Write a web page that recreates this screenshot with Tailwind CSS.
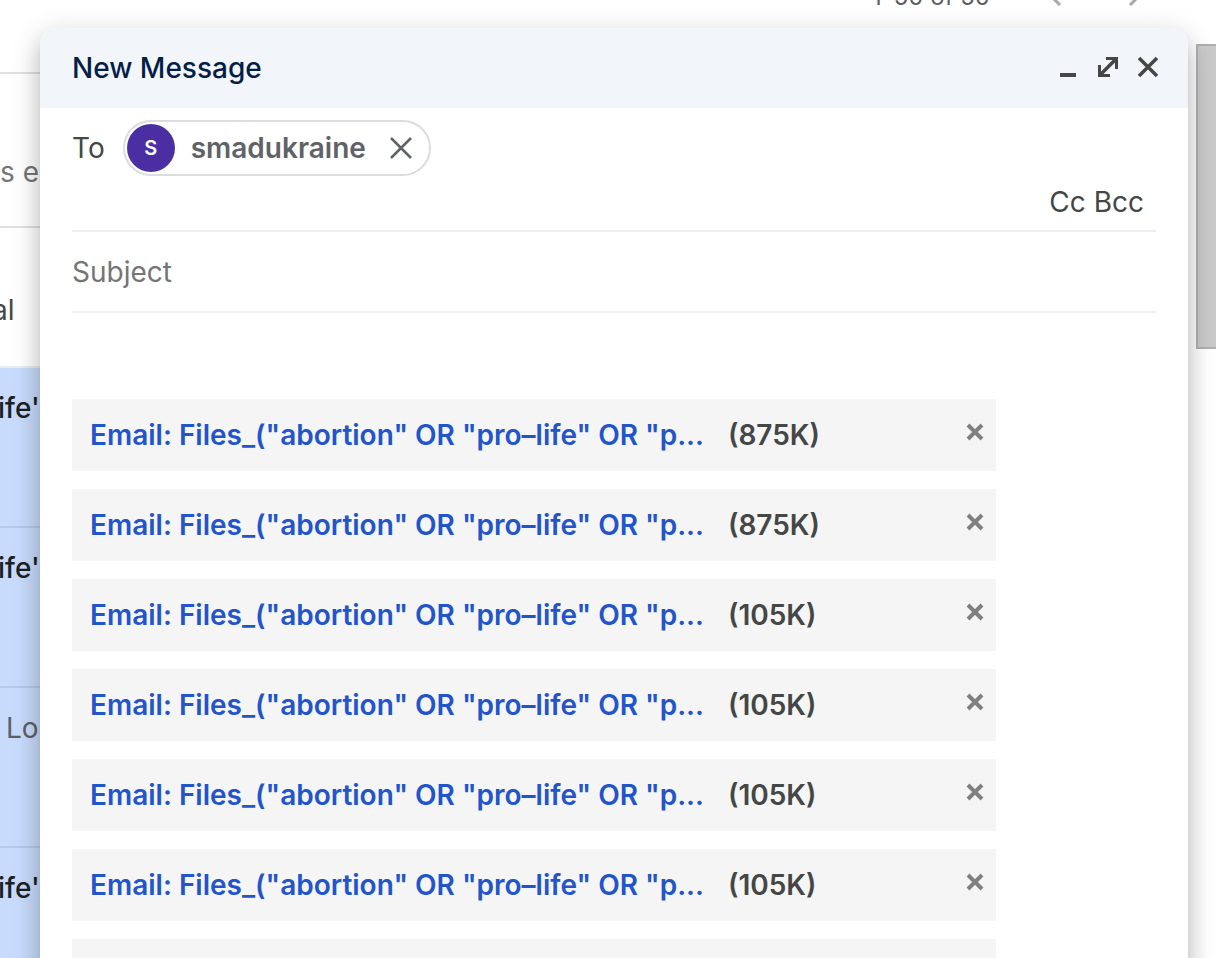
<!DOCTYPE html>
<html lang="en">
<head>
<meta charset="utf-8">
<title>New Message</title>
<script src="https://cdn.jsdelivr.net/npm/@tailwindcss/browser@4"></script>
</head>
<body class="relative h-screen overflow-hidden bg-white font-['Inter','Liberation_Sans',sans-serif] text-[28px] leading-9 text-[#444746]">

<!-- Mailbox behind the compose window -->
<div class="flex h-full overflow-hidden">
  <main class="mr-9 flex min-w-0 flex-1 flex-col">
    <header class="flex h-[74px] shrink-0 items-start justify-end overflow-hidden border-b-2 border-[#e0e0e0]">
      <div class="-mt-[19px] flex items-center gap-[54px] pr-3.5">
        <span class="text-2xl text-[#5e5e5e]">1–50 of 50</span>
        <button type="button" aria-label="Newer"><svg class="size-6" viewBox="0 0 24 24" fill="none" stroke="#a8a8a8" stroke-width="3"><path d="M16 4 8 12l8 8"/></svg></button>
        <button type="button" aria-label="Older"><svg class="size-6" viewBox="0 0 24 24" fill="none" stroke="#a8a8a8" stroke-width="3"><path d="M8 4l8 8-8 8"/></svg></button>
      </div>
    </header>
    <ul class="whitespace-nowrap">
      <li class="h-[154px] border-b-2 border-[#e0e0e0] pt-20 text-[#747775]">s en</li>
      <li class="h-[140px] border-b-2 border-[#ececec] pt-16"><span class="-ml-2">al</span></li>
      <li class="h-40 border-b-2 border-[#b7c9ea] bg-[#c8dbfc] pt-[22px] font-medium text-[#1f1f1f]"><span class="-ml-0.5">ife'</span></li>
      <li class="h-40 border-b-2 border-[#b7c9ea] bg-[#c8dbfc] pt-[22px] font-medium text-[#1f1f1f]"><span class="-ml-0.5">ife'</span></li>
      <li class="h-40 border-b-2 border-[#b7c9ea] bg-[#c8dbfc] pt-[22px] pl-1.5 text-[#5e6063]">Lo</li>
      <li class="h-40 border-b-2 border-[#b7c9ea] bg-[#c8dbfc] pt-[22px] font-medium text-[#1f1f1f]"><span class="-ml-0.5">ife'</span></li>
    </ul>
  </main>
  <div class="w-5 bg-white pt-11">
    <div class="h-[305px] border-2 border-r-0 border-[#b0b0b0] bg-[#cacaca]"></div>
  </div>
</div>

<!-- Compose window -->
<section aria-label="New Message" class="absolute top-7 right-7 -bottom-10 left-10 flex flex-col overflow-hidden rounded-t-2xl bg-white shadow-[0_16px_20px_2px_rgba(0,0,0,0.14),0_6px_28px_4px_rgba(0,0,0,0.12),0_10px_10px_-6px_rgba(0,0,0,0.2)]">
  <header class="flex h-20 shrink-0 items-center justify-between bg-[#f2f6fb] pr-7 pl-8">
    <h1 class="font-medium text-[#041e49]">New Message</h1>
    <div class="flex gap-4 text-[#444746]">
      <button type="button" aria-label="Minimize"><svg class="size-6" viewBox="0 0 24 24" fill="currentColor"><path d="M4 17h16v4H4z"/></svg></button>
      <button type="button" aria-label="Full screen"><svg class="size-6" viewBox="0 0 24 24" fill="currentColor"><path d="M10 1h12v12h-3V6.500L7.500 18H14v3H2V9h3v6.500L16.500 4H10z"/></svg></button>
      <button type="button" aria-label="Close"><svg class="size-6" viewBox="0 0 24 24" fill="none" stroke="currentColor" stroke-width="3.500"><path d="M3 2l18 18M21 2 3 20"/></svg></button>
    </div>
  </header>

  <form class="flex flex-col px-8">
    <div class="border-b-2 border-[#eeeeee] pt-3">
      <div class="flex items-center gap-[18px]">
        <span>To</span>
        <div class="flex h-14 items-center rounded-full border-2 border-[#dadce0] pr-4 pl-0.5">
          <span class="flex size-12 items-center justify-center rounded-full bg-[#4c2ea3] text-xl font-semibold text-white">S</span>
          <span class="pl-4 font-semibold text-[#5f6368]">smadukraine</span>
          <button type="button" aria-label="Remove smadukraine" class="pl-[23px]"><svg class="size-6" viewBox="0 0 24 24" fill="none" stroke="#5f6368" stroke-width="2.500"><path d="M2 2l20 20M22 2 2 22"/></svg></button>
        </div>
      </div>
      <div class="flex justify-end gap-2 pt-2 pr-3 pb-[10px]">
        <button type="button">Cc</button>
        <button type="button">Bcc</button>
      </div>
    </div>
    <input type="text" aria-label="Subject" placeholder="Subject" class="h-[81px] w-full border-b-2 border-[#eeeeee] outline-none placeholder:text-[#757575]">

    <ul id="files" class="flex max-w-[924px] flex-col gap-[18px] pt-[86px]"></ul>
  </form>
</section>

<script>
  const sizes = ['875K', '875K', '105K', '105K', '105K', '105K'];
  document.getElementById('files').innerHTML = sizes.map(size => `
    <li class="flex h-[72px] shrink-0 items-center bg-[#f5f5f5] pr-3 pl-[18px] font-semibold">
      <a href="#" class="w-[622px] text-[#2254cb]">Email: Files_("abortion" OR "pro–life" OR "p...</a>
      <span class="pl-4">(${size})</span>
      <button type="button" aria-label="Remove attachment" class="ml-auto pb-1.5"><svg class="size-[18px]" viewBox="0 0 18 18" fill="none" stroke="#808080" stroke-width="4"><path d="M2 2l14 14M16 2 2 16"/></svg></button>
    </li>`).join('') + '<li class="h-[72px] shrink-0 bg-[#f5f5f5]"></li>';
</script>
</body>
</html>
